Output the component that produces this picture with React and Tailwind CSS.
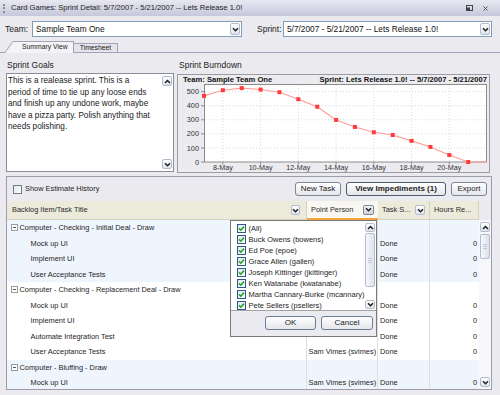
import React from "react";

const FONT = "font-['Liberation_Sans',Arial,sans-serif]";

function Chev({ up = false }) {
  return (
    <svg width="7" height="5" viewBox="0 0 7 5" className="block">
      <path
        d={up ? "M1 4L3.5 1.5L6 4" : "M1 1.2L3.5 3.7L6 1.2"}
        fill="none"
        stroke="#1f1f1f"
        strokeWidth="1.5"
      />
    </svg>
  );
}

function ArrowBox({ up = false, className = "" }) {
  return (
    <div
      className={`flex shrink-0 items-center justify-center rounded-[2px] border border-[#b2bccc] bg-gradient-to-b from-white to-[#dfe4ec] ${className}`}
    >
      <Chev up={up} />
    </div>
  );
}

function Thumb({ className = "" }) {
  return (
    <div
      className={`flex shrink-0 flex-col items-center justify-center gap-[1px] rounded-[2px] border border-[#b2bccc] bg-gradient-to-r from-[#f6f8fb] to-[#dde3ec] ${className}`}
    >
      <div className="h-px w-[4px] bg-[#bfc7d4]" />
      <div className="h-px w-[4px] bg-[#bfc7d4]" />
      <div className="h-px w-[4px] bg-[#bfc7d4]" />
    </div>
  );
}

function Check() {
  return (
    <div className="flex h-[9px] w-[9px] shrink-0 items-center justify-center border border-[#2a5a8a] bg-gradient-to-br from-[#e3e7ec] to-white">
      <svg width="7" height="7" viewBox="0 0 7 7" className="block">
        <path d="M1 3.4L2.8 5.2L6 1.6" fill="none" stroke="#22a322" strokeWidth="1.6" />
      </svg>
    </div>
  );
}

function Combo({ w, text }) {
  return (
    <div className={`flex h-[16px] items-center justify-between border border-[#7f9db9] bg-white pl-[3px] pr-[1px] ${w}`}>
      <span className="text-[8.3px] leading-none text-[#111]">{text}</span>
      <ArrowBox className="h-[12px] w-[10px]" />
    </div>
  );
}

function Chart() {
  const vals = [470, 510, 525, 515, 496, 446, 393, 299, 249, 211, 192, 150, 107, 50, 0];
  const X = (d) => 26 + d * 18.87;
  const Y = (v) => 78 - v * 0.1407;
  const pts = vals.map((v, i) => `${X(i)},${Y(v)}`).join(" ") + ` ${X(15)},${Y(0)}`;
  const yl = [0, 100, 200, 300, 400, 500];
  const xl = [
    [1, "8-May"],
    [3, "10-May"],
    [5, "12-May"],
    [7, "14-May"],
    [9, "16-May"],
    [11, "18-May"],
    [13, "20-May"],
  ];
  return (
    <svg width="311" height="88" viewBox="0 0 311 88" className="block">
      <rect x="26.5" y="0.5" width="282" height="77.5" fill="#ffffff" stroke="#8c8c8c" />
      {yl.slice(1).map((v) => (
        <line key={v} x1="27" x2="308" y1={Y(v)} y2={Y(v)} stroke="#d9d9d9" strokeDasharray="1 2" />
      ))}
      {xl.map(([d]) => (
        <line key={d} x1={X(d)} x2={X(d)} y1="1" y2="78" stroke="#d9d9d9" strokeDasharray="1 2" />
      ))}
      {yl.map((v) => (
        <g key={v}>
          <line x1="23" x2="26" y1={Y(v)} y2={Y(v)} stroke="#8c8c8c" />
          <text
            x="21"
            y={Y(v) + 2.6}
            textAnchor="end"
            fontSize="7.4"
            fontFamily="Liberation Sans, Arial, sans-serif"
            fill="#333"
          >
            {v}
          </text>
        </g>
      ))}
      {xl.map(([d, t]) => (
        <g key={t}>
          <line x1={X(d)} x2={X(d)} y1="78" y2="80.5" stroke="#8c8c8c" />
          <text
            x={X(d)}
            y="85.6"
            textAnchor="middle"
            fontSize="7.2"
            fontFamily="Liberation Sans, Arial, sans-serif"
            fill="#333"
          >
            {t}
          </text>
        </g>
      ))}
      <polyline points={pts} fill="none" stroke="#ff9c9c" strokeWidth="1.1" />
      {vals.map((v, i) => (
        <rect key={i} x={X(i) - 2} y={Y(v) - 2} width="4" height="4" fill="#ff3b3b" />
      ))}
    </svg>
  );
}

const rows = [
  { g: true, t: "Computer - Checking - Initial Deal - Draw", b: true },
  { t: "Mock up UI", b: true },
  { t: "Implement UI", b: true },
  { t: "User Acceptance Tests", b: true },
  { g: true, t: "Computer - Checking - Replacement Deal - Draw" },
  { t: "Mock up UI" },
  { t: "Implement UI" },
  { t: "Automate Integration Test" },
  { t: "User Acceptance Tests", p: true },
  { g: true, t: "Computer - Bluffing - Draw", b: true },
  { t: "Mock up UI", b: true, p: true },
];

const people = [
  "(All)",
  "Buck Owens (bowens)",
  "Ed Poe (epoe)",
  "Grace Allen (gallen)",
  "Joseph Kittinger (jkittinger)",
  "Ken Watanabe (kwatanabe)",
  "Martha Cannary-Burke (mcannary)",
  "Pete Sellers (psellers)",
];

function Btn({ children, className = "" }) {
  return (
    <div
      className={`flex h-[14px] items-center justify-center rounded-[3px] border bg-gradient-to-b from-white to-[#e4e6ea] text-[8px] leading-none text-[#222] ${className}`}
    >
      {children}
    </div>
  );
}

export default function App() {
  return (
    <div className={`relative h-[395px] w-[500px] overflow-hidden bg-[#ebebef] text-[#1b1b1b] ${FONT}`}>
      {/* Title bar */}
      <div className="flex h-[16px] items-center bg-gradient-to-b from-[#e8e8f2] to-[#c6c7db]">
        <div className="ml-[3px] h-[9px] w-[2px] border-l-2 border-dotted border-[#8a8aa0]" />
        <span className="ml-[6px] text-[7.6px] leading-none text-[#222]">
          Card Games: Sprint Detail: 5/7/2007 - 5/21/2007 -- Lets Release 1.0!
        </span>
        <div className="ml-auto mr-[12px] flex items-center gap-[10px]">
          <svg width="7" height="6" viewBox="0 0 7 6" className="block">
            <rect x="0.5" y="0.5" width="6" height="5" fill="none" stroke="#444" />
            <rect x="1" y="2.5" width="3" height="2.5" fill="#444" />
          </svg>
          <svg width="5" height="5" viewBox="0 0 5 5" className="block">
            <path d="M0.5 0.5L4.5 4.5M4.5 0.5L0.5 4.5" stroke="#555" strokeWidth="1" />
          </svg>
        </div>
      </div>

      {/* Team / Sprint */}
      <div className="mt-[5px] flex h-[16px] items-center pl-[5px]">
        <span className="w-[27px] text-[8.5px] leading-none text-[#222]">Team:</span>
        <Combo w="w-[210px]" text="Sample Team One" />
        <span className="ml-[15px] w-[26px] text-[8.5px] leading-none text-[#222]">Sprint:</span>
        <Combo w="w-[209px]" text="5/7/2007 - 5/21/2007 -- Lets Release 1.0!" />
      </div>

      {/* Tabs */}
      <div className="mt-[4px] h-[12px] border-b border-[#a3a3b8]">
        <div className="flex h-[11px] items-end pl-[5px]">
          <svg width="8" height="12" viewBox="0 0 8 12" className="relative z-10 -mb-px block">
            <polygon points="0,12 8,0.5 8,12" fill="#f4f4f6" />
            <line x1="0" y1="11.5" x2="8" y2="0.5" stroke="#a3a3b8" />
          </svg>
          <div className="relative z-10 -mb-px flex h-[12px] w-[61px] items-center border-t border-r border-[#a3a3b8] bg-[#f4f4f6] pl-[9px] text-[6.8px] leading-none text-[#222]">
            Summary View
          </div>
          <div className="flex h-[9px] w-[44px] items-center justify-center border border-b-0 border-l-0 border-[#a3a3b8] bg-[#e4e4ea] text-[6.8px] leading-none text-[#222]">
            Timesheet
          </div>
        </div>
      </div>

      {/* Goals + Burndown */}
      <div className="mt-[7px] flex pl-[6px]">
        <div className="w-[168px]">
          <div className="h-[10px] pl-[1px] text-[8.5px] leading-[10px] text-[#222]">Sprint Goals</div>
          <div className="mt-[3px] flex h-[99px] border border-[#8b8e98] bg-white">
            <div className="flex-1 pl-[1px] pt-[1px] text-[8.2px] leading-[11.5px] text-[#1a1a1a]">
              <div className="whitespace-nowrap">This is a realease sprint. This is a</div>
              <div className="whitespace-nowrap">period of time to tie up any loose ends</div>
              <div className="whitespace-nowrap">and finish up any undone work, maybe</div>
              <div className="whitespace-nowrap">have a pizza party. Polish anything that</div>
              <div className="whitespace-nowrap">needs polishing.</div>
            </div>
            <div className="flex w-[11px] flex-col justify-between py-[2px] pr-[1px]">
              <ArrowBox up className="h-[10px] w-[10px]" />
              <ArrowBox className="h-[10px] w-[10px]" />
            </div>
          </div>
        </div>
        <div className="ml-[3px] w-[313px]">
          <div className="h-[10px] pl-[2px] text-[8.5px] leading-[10px] text-[#222]">Sprint Burndown</div>
          <div className="mt-[4px] h-[99px] border border-[#9c9ca6] bg-[#ececf0]">
            <div className="flex h-[9px] items-center justify-between pl-[5px] pr-[2px] text-[7.6px] font-bold leading-none text-[#111]">
              <span className="whitespace-nowrap">Team: Sample Team One</span>
              <span className="whitespace-nowrap">Sprint: Lets Release 1.0! -- 5/7/2007 - 5/21/2007</span>
            </div>
            <Chart />
          </div>
        </div>
      </div>

      {/* Lower panel */}
      <div className="ml-[6px] mt-[3px] h-[214px] w-[486px] border border-[#9c9cab]">
        {/* toolbar */}
        <div className="flex h-[24px] items-center">
          <div className="ml-[6px] h-[9px] w-[9px] border border-[#6f7f92] bg-gradient-to-br from-[#e2e5ea] to-white" />
          <span className="ml-[3px] text-[7.4px] leading-none text-[#222]">Show Estimate History</span>
          <div className="ml-auto mr-[4px] flex items-center gap-[5px]">
            <Btn className="w-[46px] border-[#7d8896]">New Task</Btn>
            <Btn className="w-[100px] border-[#4e5b6e] text-[8.3px] font-bold">View Impediments (1)</Btn>
            <Btn className="w-[36px] border-[#7d8896]">Export</Btn>
          </div>
        </div>

        {/* header */}
        <div className="flex h-[19px] text-[7.4px] leading-none text-[#2a2a2a]">
          <div className="flex w-[300px] items-center justify-between border-r border-b border-[#d5d2bc] bg-[#ebeadb] pl-[5px] pr-[6px]">
            <span>Backlog Item/Task Title</span>
            <ArrowBox className="h-[10px] w-[9px]" />
          </div>
          <div className="flex w-[71px] items-center justify-between border-b-2 border-[#f2a53a] bg-[#f8f7f1] pl-[4px] pr-[4px]">
            <span>Point Person</span>
            <div className="flex h-[10px] w-[11px] items-center justify-center rounded-[2px] border border-[#7d8896] bg-gradient-to-b from-[#f1f1f1] to-[#cfd4dc]">
              <Chev />
            </div>
          </div>
          <div className="flex w-[52px] items-center justify-between border-r border-b border-[#d5d2bc] bg-[#ebeadb] pl-[4px] pr-[4px]">
            <span>Task S...</span>
            <ArrowBox className="h-[10px] w-[10px]" />
          </div>
          <div className="flex w-[49px] items-center border-r border-b border-[#d5d2bc] bg-[#ebeadb] pl-[4px]">
            <span>Hours Re...</span>
          </div>
          <div className="w-[12px] bg-[#ebebef]" />
        </div>

        {/* body */}
        <div className="flex h-[169px] overflow-hidden">
          <div className="w-[472px] overflow-hidden text-[7.4px] leading-none text-[#1e1e1e]">
            {rows.map((r, i) => (
              <div key={i} className={`flex h-[15.5px] ${r.b ? "bg-[#eef5fd]" : "bg-white"}`}>
                <div className="flex w-[300px] items-center border-r border-[#dedede]">
                  {r.g ? (
                    <>
                      <div className="ml-[3.5px] flex h-[7px] w-[7px] items-center justify-center border border-[#9a9a9a] bg-white">
                        <div className="h-px w-[3px] bg-[#555]" />
                      </div>
                      <span className="ml-[2px] whitespace-nowrap">{r.t}</span>
                    </>
                  ) : (
                    <span className="pl-[23.5px] whitespace-nowrap">{r.t}</span>
                  )}
                </div>
                <div className="flex w-[71px] items-center border-r border-[#dedede] pl-[1.5px] whitespace-nowrap">
                  {r.p ? "Sam Vimes (svimes)" : ""}
                </div>
                <div className="flex w-[52px] items-center border-r border-[#dedede] pl-[2px]">
                  {r.g ? "" : "Done"}
                </div>
                <div className="flex w-[49px] items-center justify-end pr-[2px]">{r.g ? "" : "0"}</div>
              </div>
            ))}
          </div>
          <div className="flex w-[12px] flex-col bg-[#f7f8fa] pl-[1px]">
            <ArrowBox up className="mt-[2px] h-[10px] w-[10px]" />
            <Thumb className="mt-[2px] h-[25px] w-[10px]" />
            <div className="flex-1" />
            <ArrowBox className="mb-[2px] h-[10px] w-[10px]" />
          </div>
        </div>
      </div>

      {/* Point person filter popup */}
      <div className="absolute left-[230px] top-[220px] z-20 h-[117px] w-[147px] border border-[#7a7a7a] bg-[#ebebef]">
        <div className="flex h-[90px] border-b border-[#a4a4a8] bg-white">
          <div className="flex-1 pt-[2px] text-[7.5px] leading-none text-[#1e1e1e]">
            {people.map((p) => (
              <div key={p} className="flex h-[11px] items-center pl-[6px]">
                <Check />
                <span className="ml-[2.5px] whitespace-nowrap">{p}</span>
              </div>
            ))}
          </div>
          <div className="flex w-[11px] flex-col pr-[1px]">
            <ArrowBox up className="mt-[2px] h-[9px] w-[10px]" />
            <Thumb className="mt-[1px] h-[54px] w-[10px]" />
            <div className="flex-1" />
            <ArrowBox className="mb-[1px] h-[9px] w-[10px]" />
          </div>
        </div>
        <div className="flex h-[24px] items-center justify-end gap-[5px] pr-[3px]">
          <Btn className="w-[51px] border-[#6b7d98] text-[7.5px]">OK</Btn>
          <Btn className="w-[52px] border-[#6b7d98] text-[7.5px]">Cancel</Btn>
        </div>
      </div>
    </div>
  );
}
